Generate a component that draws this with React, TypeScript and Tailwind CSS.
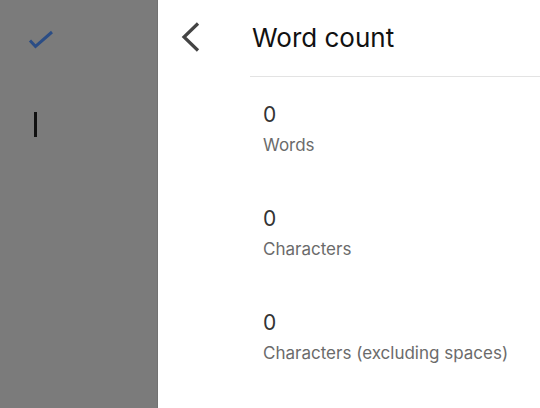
import React from 'react';

const stats = [
  { value: 0, label: 'Words' },
  { value: 0, label: 'Characters' },
  { value: 0, label: 'Characters (excluding spaces)' },
];

const App: React.FC = () => {
  return (
    <div className="flex h-[408px] w-[540px] overflow-hidden bg-white" style={{ fontFamily: 'Inter, "Liberation Sans", Arial, sans-serif' }}>
      {/* Dimmed document side */}
      <div className="flex h-full w-[158px] shrink-0 flex-col border-r border-[#727272] bg-[#7b7b7b]">
        <svg className="ml-[28px] mt-[29px]" width="26" height="22" viewBox="0 0 26 22" fill="none">
          <polyline points="2,11.5 7.5,17.5 24,3" stroke="#2b4d85" strokeWidth="3" />
        </svg>
        <div className="ml-[34px] mt-[61px] h-[25px] w-[3px] bg-[#111111]" />
      </div>

      {/* Word count panel */}
      <div className="flex flex-1 flex-col">
        <div className="flex h-[77px]">
          <div className="flex w-[92px] shrink-0 items-center pl-[22px]">
            <svg className="mb-[4px]" width="20" height="30" viewBox="0 0 20 30" fill="none">
              <polyline points="18,1.5 4,15 18,28.5" stroke="#444444" strokeWidth="3.2" />
            </svg>
          </div>
          <div className="flex flex-1 items-center border-b border-[#e3e3e3] pl-[2px]">
            <h1 className="text-[26px] leading-[30px] text-[#111111]">Word count</h1>
          </div>
        </div>

        <div className="flex flex-col gap-[51px] pl-[105px] pt-[25px]">
          {stats.map((s) => (
            <div key={s.label} className="flex flex-col gap-[7px]">
              <span className="text-[21px] leading-[26px] text-[#333333]">{s.value}</span>
              <span className="text-[17px] leading-[20px] text-[#6b6b6b]">{s.label}</span>
            </div>
          ))}
        </div>
      </div>
    </div>
  );
};

export default App;
